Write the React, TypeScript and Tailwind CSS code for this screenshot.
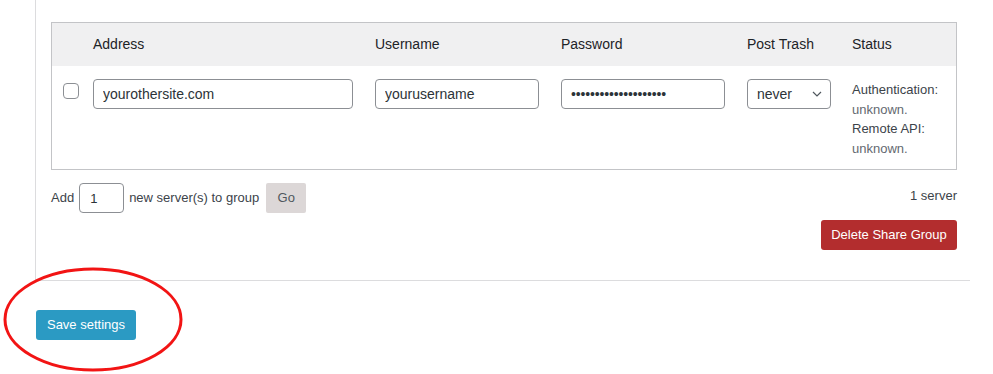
import { useState } from 'react'

const columns = ['', 'Address', 'Username', 'Password', 'Post Trash', 'Status']

const gridCols = 'grid grid-cols-[41px_282px_186px_186px_105px_1fr]'

const inputCls =
	'h-[30px] rounded-[4px] border border-[#8c8f94] bg-white px-[9px] text-[14px] text-[#2c3338] outline-none'

function ServerRow() {
	const [trash, setTrash] = useState('never')

	return (
		<div className={`${gridCols} h-[103px] pt-[13px]`}>
			<div className="pl-[11px] pt-[3px]">
				<input
					type="checkbox"
					className="h-4 w-4 appearance-none rounded-[4px] border border-[#8c8f94] bg-white"
				/>
			</div>
			<div>
				<input className={`${inputCls} w-[260px]`} defaultValue="yourothersite.com" />
			</div>
			<div>
				<input className={`${inputCls} w-[164px]`} defaultValue="yourusername" />
			</div>
			<div>
				<input
					type="password"
					className={`${inputCls} w-[164px] text-[10px] tracking-[-0.15px]`}
					defaultValue="yourpassword12345678"
				/>
			</div>
			<div className="relative w-[84px]">
				<select
					value={trash}
					onChange={e => setTrash(e.target.value)}
					className={`${inputCls} w-[84px] appearance-none pl-[9px]`}
				>
					<option value="never">never</option>
					<option value="always">always</option>
				</select>
				<svg
					className="pointer-events-none absolute right-[9px] top-[12px]"
					width="10"
					height="6"
					viewBox="0 0 10 6"
					fill="none"
				>
					<path d="M1 1l4 4 4-4" stroke="#50575e" strokeWidth="1.2" />
				</svg>
			</div>
			<div className="pt-[1px] text-[13px] leading-[19.5px]">
				<div className="text-[#3c434a]">Authentication:</div>
				<div className="text-[#646970]">unknown.</div>
				<div className="text-[#3c434a]">Remote API:</div>
				<div className="text-[#646970]">unknown.</div>
			</div>
		</div>
	)
}

export default function App() {
	return (
		<div
			className="relative h-[374px] w-[993px] overflow-hidden bg-white text-[#1d2327]"
			style={{ fontFamily: '"Liberation Sans", Arial, sans-serif' }}
		>
			<div className="ml-[35px] w-[935px] border-b border-l border-[#dcdcde] pb-[30px] pl-[15px] pr-[13px] pt-[22px]">
				<div className="w-[906px] border border-[#c3c4c7]">
					<div className={`${gridCols} h-[43px] items-center bg-[#f0f0f1] text-[14px] text-[#1d2327]`}>
						{columns.map((c, i) => (
							<div key={i}>{c}</div>
						))}
					</div>
					<ServerRow />
				</div>

				<div className="mt-[13px] flex w-[906px] items-start justify-between text-[13px] text-[#3c434a]">
					<div className="flex items-center">
						<span>Add</span>
						<input
							className="ml-[5px] h-[30px] w-[45px] rounded-[4px] border border-[#8c8f94] px-[10px] text-[13px] text-[#2c3338] outline-none"
							defaultValue="1"
						/>
						<span className="ml-[5px]">new server(s) to group</span>
						<button className="ml-[7px] h-[30px] w-[40px] rounded-[2px] bg-[#dcd7d7] text-[13px] text-[#50575e]">
							Go
						</button>
					</div>
					<span className="pt-[3px]">1 server</span>
				</div>

				<div className="mt-[7px] flex w-[906px] justify-end">
					<button className="flex h-[30px] w-[136px] items-center justify-center rounded-[3px] bg-[#b32d2e] text-[13px] text-white">
						Delete Share Group
					</button>
				</div>
			</div>

			<div className="ml-[36px] mt-[29px]">
				<button className="h-[30px] w-[100px] rounded-[3px] bg-[#2b9ac3] text-[13px] text-white">
					Save settings
				</button>
			</div>

			{/* annotation circle */}
			<svg className="absolute left-[2px] top-[267px]" width="182" height="106" viewBox="0 0 182 106">
				<ellipse cx="91" cy="52.5" rx="88" ry="50.5" fill="none" stroke="#f21414" strokeWidth="3" />
			</svg>
		</div>
	)
}
